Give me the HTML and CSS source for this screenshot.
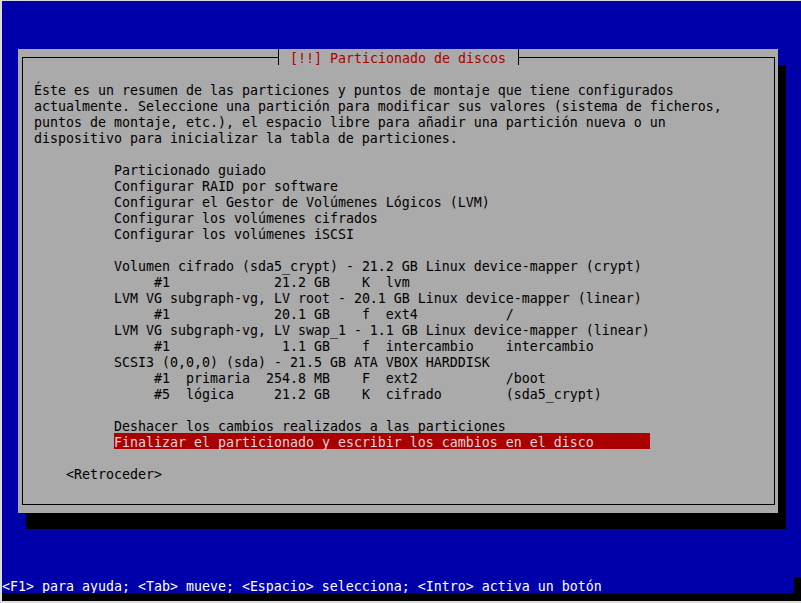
FILE: index.html
```html
<!DOCTYPE html>
<html lang="es">
<head>
    <meta charset="UTF-8">
    <title>Particionado de discos</title>
    <link rel="stylesheet" href="styles.css">
</head>
<body>
    <div class="screen">
        <div class="dialog">
            <div class="frame">
                <div class="title">
                    <span class="tick tick-left"></span>
                    <span class="title-text"> [!!] Particionado de discos </span>
                    <span class="tick tick-right"></span>
                </div>

                <div class="body">
                    <div class="row">Éste es un resumen de las particiones y puntos de montaje que tiene configurados</div>
                    <div class="row">actualmente. Seleccione una partición para modificar sus valores (sistema de ficheros,</div>
                    <div class="row">puntos de montaje, etc.), el espacio libre para añadir una partición nueva o un</div>
                    <div class="row">dispositivo para inicializar la tabla de particiones.</div>
                    <div class="row"> </div>

                    <div class="menu">
                        <div class="row">Particionado guiado</div>
                        <div class="row">Configurar RAID por software</div>
                        <div class="row">Configurar el Gestor de Volúmenes Lógicos (LVM)</div>
                        <div class="row">Configurar los volúmenes cifrados</div>
                        <div class="row">Configurar los volúmenes iSCSI</div>
                        <div class="row"> </div>
                        <div class="row">Volumen cifrado (sda5_crypt) - 21.2 GB Linux device-mapper (crypt)</div>
                        <div class="row">     #1             21.2 GB    K  lvm</div>
                        <div class="row">LVM VG subgraph-vg, LV root - 20.1 GB Linux device-mapper (linear)</div>
                        <div class="row">     #1             20.1 GB    f  ext4           /</div>
                        <div class="row">LVM VG subgraph-vg, LV swap_1 - 1.1 GB Linux device-mapper (linear)</div>
                        <div class="row">     #1              1.1 GB    f  intercambio    intercambio</div>
                        <div class="row">SCSI3 (0,0,0) (sda) - 21.5 GB ATA VBOX HARDDISK</div>
                        <div class="row">     #1  primaria  254.8 MB    F  ext2           /boot</div>
                        <div class="row">     #5  lógica     21.2 GB    K  cifrado        (sda5_crypt)</div>
                        <div class="row"> </div>
                        <div class="row">Deshacer los cambios realizados a las particiones</div>
                        <div class="row selected">Finalizar el particionado y escribir los cambios en el disco</div>
                    </div>

                    <div class="row"> </div>
                    <div class="row buttons">&lt;Retroceder&gt;</div>
                </div>
            </div>
        </div>

        <div class="status">
            <div class="status-text">&lt;F1&gt; para ayuda; &lt;Tab&gt; mueve; &lt;Espacio&gt; selecciona; &lt;Intro&gt; activa un botón</div>
            <div class="status-end"></div>
        </div>
        <div class="bottom-strip"></div>
    </div>
</body>
</html>
```

FILE: styles.css
```css
html, body {
    margin: 0;
    height: 100%;
    overflow: hidden;
}
body {
    background-color: #dcdcdc;
    padding: 1px 0 0 2px;
    box-sizing: border-box;
    font-family: "DejaVu Sans Mono", "Liberation Mono", monospace;
    font-size: 13.29px;   /* 8px por columna */
    line-height: 20px;    /* las filas miden 16px, el texto baja 2px */
}

/* pantalla de 800x600, celdas de 8x16 */
.screen {
    width: 800px;
    height: 600px;
    background-color: #0000aa;
    display: flex;
    flex-direction: column;
}

/* ventana de dialogo: columnas 2..96, filas 3..31 */
.dialog {
    margin: 48px 0 0 16px;
    width: 760px;
    height: 464px;
    background-color: #aaaaaa;
    box-shadow: 8px 16px 0 #000000;
    display: flex;
    flex-direction: column;
    color: #000000;
}

.frame {
    flex: 1;
    margin: 8px 3px 8px 4px;
    border: 1px solid #000000;
}

/* titulo sobre el borde superior */
.title {
    display: flex;
    align-items: flex-start;
    height: 16px;
    margin: -9px 0 0 251px;
}
.tick {
    width: 8px;
    height: 16px;
}
.tick-left {
    background: linear-gradient(to right, transparent 4px, #000 4px, #000 5px, #aaaaaa 5px);
}
.tick-right {
    background: linear-gradient(to right, #aaaaaa 4px, #000 4px, #000 5px, transparent 5px);
}
.title-text {
    height: 16px;
    white-space: pre;
    background-color: #aaaaaa;
    color: #aa0000;
}

.body {
    padding: 16px 0 0 11px;
}

.row {
    height: 16px;
    white-space: pre;
}

.menu {
    margin-left: 80px;
}

.selected {
    width: 536px;
    background-color: #aa0000;
    color: #e2d6d6;
}

.buttons {
    margin-left: 32px;
}

/* linea de ayuda abajo */
.status {
    margin-top: auto;
    display: flex;
    height: 16px;
}
.status-text {
    width: 792px;
    white-space: pre;
    color: #ffffff;
    background-color: #0000aa;
}
.status-end {
    flex: 1;
    background-color: #000000;
}
.bottom-strip {
    height: 8px;
    background-color: #000000;
}
```
